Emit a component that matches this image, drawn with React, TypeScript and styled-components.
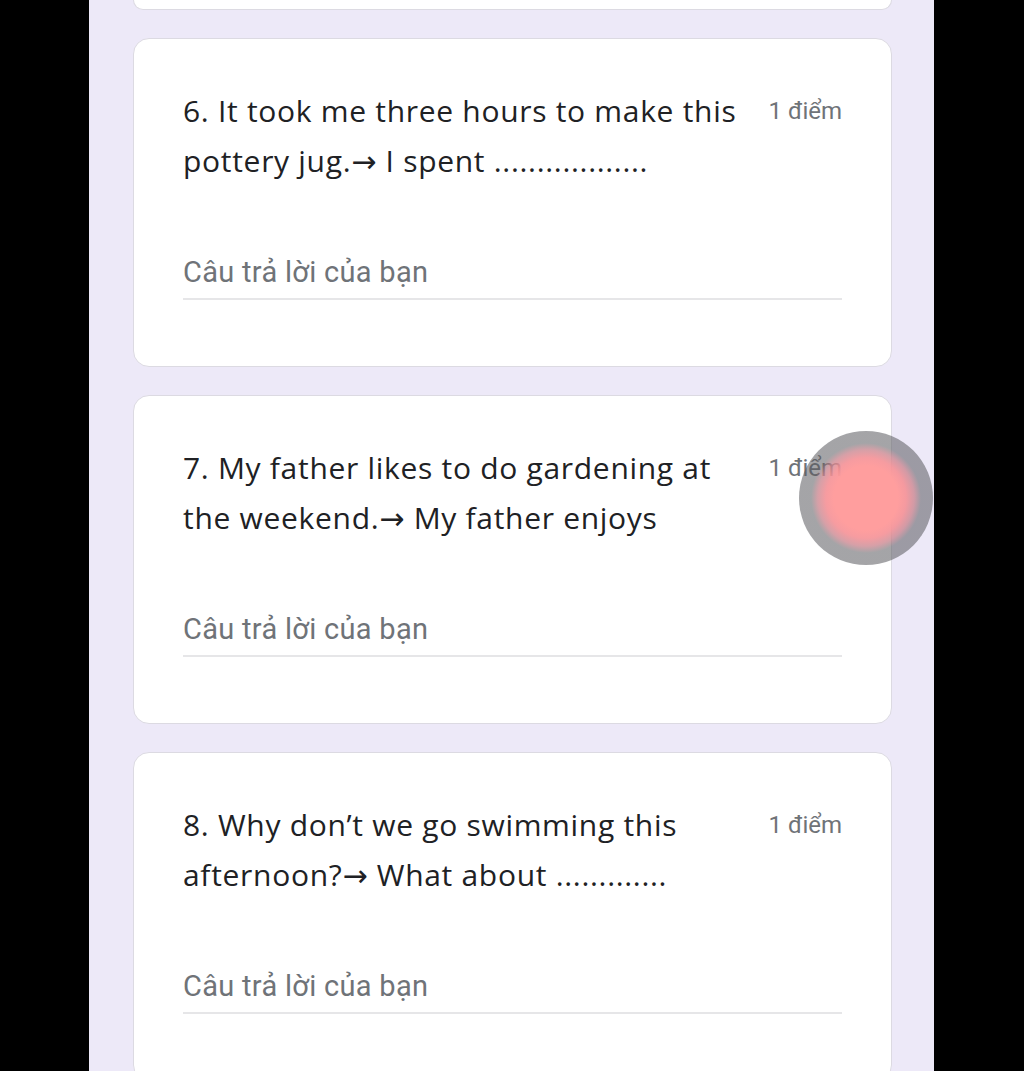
import { createGlobalStyle, styled } from "styled-components";

const GlobalStyle = createGlobalStyle`
  html, body {
    margin: 0;
    padding: 0;
    background: #000;
    height: 1071px;
    overflow: hidden;
  }
  body {
    font-family: Roboto, "Noto Sans", Arial, sans-serif;
  }
`;

const questions = [
  {
    id: 6,
    title: "6. It took me three hours to make this pottery jug.→ I spent ..................",
  },
  {
    id: 7,
    title: "7. My father likes to do gardening at the weekend.→ My father enjoys",
  },
  {
    id: 8,
    title: "8. Why don’t we go swimming this afternoon?→ What about .............",
  },
];

const Screen = styled.div`
  position: relative;
  display: flex;
  justify-content: flex-start;
  height: 1071px;
  background: #000;
`;

const Column = styled.main`
  margin-left: 89px;
  width: 845px;
  background: #ede9f8;
  padding: 0 42px 0 44px;
  box-sizing: border-box;
  display: flex;
  flex-direction: column;
  gap: 28px;
`;

const PrevCard = styled.div`
  flex-shrink: 0;
  height: 9px;
  background: #fff;
  border: 1px solid #dcdae2;
  border-top: none;
  border-radius: 0 0 16px 16px;
`;

const Card = styled.section`
  background: #fff;
  border: 1px solid #dcdae2;
  border-radius: 16px;
  padding: 47px 49px 66px 49px;
  flex-shrink: 0;
`;

const Header = styled.div`
  display: flex;
  align-items: flex-start;
  gap: 20px;
`;

const Title = styled.div`
  flex: 1;
  font-family: "Open Sans", "DejaVu Sans", sans-serif;
  font-size: 30px;
  line-height: 50px;
  color: #202124;
  letter-spacing: 0.7px;
`;

const Points = styled.div`
  font-size: 24px;
  line-height: 50px;
  color: #6f7378;
  white-space: nowrap;
`;

const Answer = styled.div`
  margin-top: 67px;
  font-size: 29px;
  line-height: 38px;
  letter-spacing: 0.3px;
  color: #6f7378;
  padding-bottom: 7px;
  border-bottom: 2px solid #e6e6e8;
`;

// touch indicator from the screen recording
const Touch = styled.div`
  position: absolute;
  left: 799px;
  top: 431px;
  width: 134px;
  height: 134px;
  border-radius: 50%;
  background: radial-gradient(
    circle closest-side at center,
    rgba(255, 158, 158, 1) 0%,
    rgba(255, 158, 158, 1) 48%,
    rgba(245, 145, 150, 0.9) 60%,
    rgba(200, 128, 138, 0.75) 72%,
    rgba(90, 90, 95, 0.55) 82%,
    rgba(90, 90, 95, 0.55) 100%
  );
`;

export default function App() {
  return (
    <>
      <GlobalStyle />
      <Screen>
        <Column>
          <PrevCard />
          {questions.map((q) => (
            <Card key={q.id}>
              <Header>
                <Title>{q.title}</Title>
                <Points>1 điểm</Points>
              </Header>
              <Answer>Câu trả lời của bạn</Answer>
            </Card>
          ))}
        </Column>
        <Touch />
      </Screen>
    </>
  );
}
